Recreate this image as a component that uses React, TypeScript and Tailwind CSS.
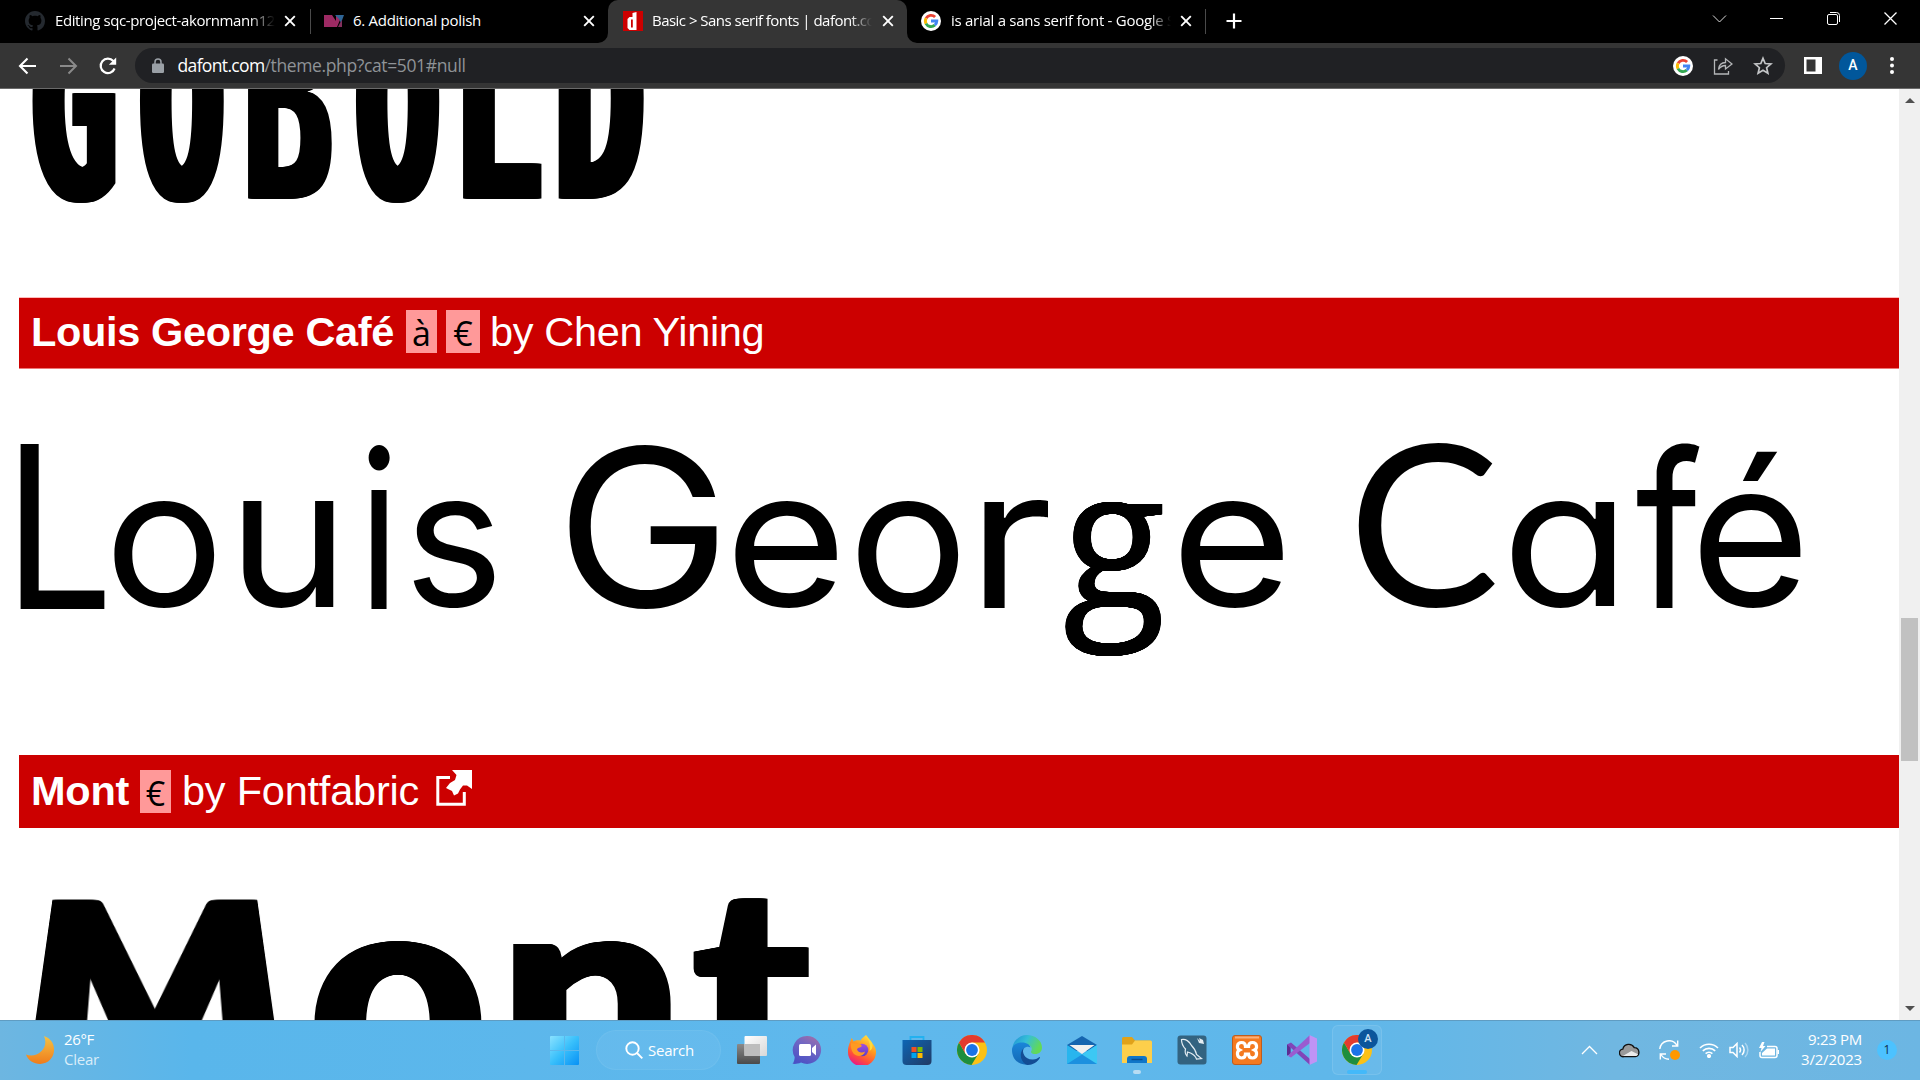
import React from "react";

const UI = '"Open Sans", "Noto Sans", sans-serif';
const ARIAL = '"Liberation Sans", Arial, sans-serif';

const canvas = document.createElement("canvas").getContext("2d")!;

/* A line of text whose tracking is adjusted to fill a known width. */
function Fit({ text, w, size, family = UI, weight = 400, className = "" }: {
  text: string; w: number; size: number; family?: string; weight?: number; className?: string;
}) {
  canvas.font = `${weight} ${size}px ${family}`;
  const spacing = (w - canvas.measureText(text).width) / text.length;
  return (
    <span
      className={`block shrink-0 whitespace-pre ${className}`}
      style={{ fontFamily: family, fontSize: size, fontWeight: weight, letterSpacing: spacing, width: w }}
    >
      {text}
    </span>
  );
}

type Glyph = {
  c: string; x0: number; x1: number; y0?: number; y1?: number;
  font?: string; weight?: number; grow?: number; taper?: number;
};

/* Display lettering: every character is stretched to its own ink box, in flow. */
function Specimen({ glyphs, family, weight, size, top, bottom, grow = 0, feature }: {
  glyphs: Glyph[]; family: string; weight: number; size: number; top: number; bottom: number; grow?: number; feature?: string;
}) {
  return (
    <div className="flex whitespace-pre text-black blur-[0.7px]" style={{ fontFeatureSettings: feature, height: bottom, paddingLeft: glyphs[0].x0 }}>
      {glyphs.map((g, i) => {
        const next = glyphs[i + 1];
        const width = next ? next.x0 - g.x0 : g.x1 - g.x0;
        if (g.c === " ") return <span key={i} className="shrink-0" style={{ width }}> </span>;
        const fam = g.font ?? family;
        const wt = g.weight ?? weight;
        canvas.font = `${wt} ${size}px ${fam}`;
        const m = canvas.measureText(g.c);
        const extra = g.grow ?? grow;
        const sx = (g.x1 - g.x0 - extra) / (m.actualBoundingBoxRight + m.actualBoundingBoxLeft);
        const y0 = g.y0 ?? top;
        const y1 = g.y1 ?? bottom;
        /* taper: width of the top edge relative to the baseline */
        const taper = g.taper ?? 1;
        const tall = (y1 - y0) / taper;
        const sy = tall / (m.actualBoundingBoxAscent + m.actualBoundingBoxDescent);
        const p = (1 / taper - 1) / tall;
        const mid = (g.x1 - g.x0) / 2;
        const keystone = p ? `translate(${mid}px,${y1}px) matrix3d(1,0,0,0,0,1,0,${-p},0,0,1,0,0,0,0,1) translate(${-mid}px,${-y1}px) ` : "";
        const baseline = (size - m.fontBoundingBoxAscent - m.fontBoundingBoxDescent) / 2 + m.fontBoundingBoxAscent;
        const tx = m.actualBoundingBoxLeft * sx;
        const ty = y1 - (baseline + m.actualBoundingBoxDescent) * sy;
        const shadow = extra
          ? Array.from({ length: 10 }, (_, k) => `${((k + 1) / 10) * (extra / sx)}px 0 #000`).join(",")
          : undefined;
        return (
          <span
            key={i}
            className="block shrink-0 origin-top-left"
            style={{
              width, height: size, lineHeight: `${size}px`, fontFamily: fam, fontWeight: wt, fontSize: size,
              transform: `${keystone}matrix(${sx},0,0,${sy},${tx},${ty})`, textShadow: shadow,
            }}
          >
            {g.c}
          </span>
        );
      })}
    </div>
  );
}

const gobold: Glyph[] = [
  { c: "G", x0: 31, x1: 117, y1: 114 },
  { c: "O", x0: 137.5, x1: 224, y1: 114 },
  { c: "B", x0: 246, x1: 333.5 },
  { c: "O", x0: 354, x1: 440, y1: 114 },
  { c: "L", x0: 463, x1: 541.5 },
  { c: "D", x0: 557.5, x1: 644 },
];

const LATO = "Lato, sans-serif";

const louis: Glyph[] = [
  { c: "L", x0: 19.5, x1: 104 },
  { c: "o", x0: 114, x1: 215, y0: 57 },
  { c: "u", x0: 243, x1: 334, y0: 57 },
  { c: "i", x0: 368, x1: 390 },
  { c: "s", x0: 413, x1: 495, y0: 57 },
  { c: " ", x0: 495, x1: 569 },
  { c: "G", x0: 569, x1: 717 },
  { c: "e", x0: 735, x1: 837, y0: 57 },
  { c: "o", x0: 858, x1: 959, y0: 57 },
  { c: "r", x0: 984, x1: 1048, y0: 57 },
  { c: "g", x0: 1065, x1: 1163, y0: 57, y1: 212, font: '"Open Sans", sans-serif', weight: 400, grow: 2 },
  { c: "e", x0: 1181, x1: 1283, y0: 57 },
  { c: " ", x0: 1283, x1: 1357 },
  { c: "C", x0: 1357.5, x1: 1495, font: LATO },
  { c: "a", x0: 1510, x1: 1604, y0: 57 },
  { c: "f", x0: 1637, x1: 1700 },
  { c: "é", x0: 1700, x1: 1800.5, y0: 7 },
];

const mont: Glyph[] = [
  { c: "M", x0: 19, x1: 291, taper: 0.776, grow: 16 },
  { c: "o", x0: 310, x1: 486, y0: 41, y1: 214, grow: 8 },
  { c: "n", x0: 510, x1: 671, y0: 41, grow: 8 },
  { c: "t", x0: 689, x1: 813, y1: 213, grow: 8 },
];

function Cross() {
  return (
    <svg viewBox="0 0 12 12" className="size-3 shrink-0" fill="none" stroke="#fff" strokeWidth="1.9">
      <path d="M1.2 1.2 10.8 10.8M10.8 1.2 1.2 10.8" />
    </svg>
  );
}

function GoogleG({ className }: { className: string }) {
  return (
    <svg viewBox="0 0 20 20" className={className}>
      <circle cx="10" cy="10" r="10" fill="#fff" />
      <g fill="none" strokeWidth="2.9">
        <path d="M5.1 7.3A5.7 5.7 0 0 1 14.1 6" stroke="#ea4335" />
        <path d="M5.1 12.8a5.9 5.9 0 0 1 0-5.6" stroke="#fbbc05" />
        <path d="M13.8 14.2A5.7 5.7 0 0 1 5 12.6" stroke="#34a853" />
        <path d="M10 10h5.8a5.6 5.6 0 0 1-2 4.2" stroke="#4285f4" />
      </g>
    </svg>
  );
}

function Github() {
  return (
    <svg viewBox="0 0 16 16" className="size-5 shrink-0" fill="#24292f">
      <path d="M8 0C3.58 0 0 3.58 0 8c0 3.54 2.29 6.53 5.47 7.59.4.07.55-.17.55-.38 0-.19-.01-.82-.01-1.49-2.01.37-2.53-.49-2.69-.94-.09-.23-.48-.94-.82-1.13-.28-.15-.68-.52-.01-.53.63-.01 1.08.58 1.23.82.72 1.21 1.87.87 2.33.66.07-.52.28-.87.51-1.07-1.78-.2-3.64-.89-3.64-3.95 0-.87.31-1.59.82-2.15-.08-.2-.36-1.02.08-2.12 0 0 .67-.21 2.2.82.64-.18 1.32-.27 2-.27s1.36.09 2 .27c1.53-1.04 2.2-.82 2.2-.82.44 1.1.16 1.92.08 2.12.51.56.82 1.27.82 2.15 0 3.07-1.87 3.75-3.65 3.95.29.25.54.73.54 1.48 0 1.07-.01 1.93-.01 2.2 0 .21.15.46.55.38A8.01 8.01 0 0 0 16 8c0-4.42-3.58-8-8-8z" />
    </svg>
  );
}

function TabStrip() {
  return (
    <div className="flex h-[43px] shrink-0 bg-black text-white">
      <div className="flex h-[42px] w-[310px] items-center pl-[25px]">
        <Github />
        <div className="ml-[10px] w-[220px] overflow-hidden [mask-image:linear-gradient(90deg,#000_88%,transparent)]">
          <Fit text="Editing sqc-project-akornmann12" w={220} size={15} className="-mt-px" />
        </div>
        <div className="ml-[9px]"><Cross /></div>
      </div>
      <div className="mt-[9px] h-[25px] w-px bg-[#4a4a4a]" />
      <div className="flex h-[42px] w-[297px] items-center pl-[13px]">
        <svg viewBox="0 0 20 12" className="h-3 w-5 shrink-0">
          <path d="M0 0h8l4 6V0h2l2 5-3 7H0z" fill="#9d2a63" />
          <path d="M11 0h9l-3 8-2-4z" fill="#2f6596" />
          <path d="M16 8l2-3v7h-4z" fill="#84305e" />
        </svg>
        <Fit text="6. Additional polish" w={128} size={15} className="ml-[9px] -mt-px" />
        <div className="ml-[102px]"><Cross /></div>
      </div>
      <div className="relative flex h-[43px] w-[299px] items-center rounded-t-[10px] bg-[#353535] pb-px pl-[15px]">
        <svg viewBox="0 0 10 10" className="absolute bottom-0 -left-[10px] size-[10px]"><path d="M10 0v10H0A10 10 0 0 0 10 0z" fill="#353535" /></svg>
        <svg viewBox="0 0 10 10" className="absolute -right-[10px] bottom-0 size-[10px]"><path d="M0 0v10h10A10 10 0 0 1 0 0z" fill="#353535" /></svg>
        <svg viewBox="0 0 20 20" className="size-5 shrink-0">
          <path d="M0 0h20v20H0z" fill="#c00" />
          <path d="M9.500 2l4-1v18H6.500l-2-2V8l2-2h3z" fill="#fff" />
          <path d="M8 8.500h1.800v8H8z" fill="#c00" />
        </svg>
        <div className="ml-[9px] w-[220px] overflow-hidden [mask-image:linear-gradient(90deg,#000_90%,transparent)]">
          <Fit text="Basic > Sans serif fonts | dafont.co" w={223} size={15} className="-mt-px" />
        </div>
        <div className="ml-[10px]"><Cross /></div>
      </div>
      <div className="flex h-[42px] w-[298px] items-center pl-[14px]">
        <GoogleG className="size-5 shrink-0" />
        <div className="ml-[10px] w-[220px] overflow-hidden [mask-image:linear-gradient(90deg,#000_90%,transparent)]">
          <Fit text="is arial a sans serif font - Google S" w={224} size={15} className="-mt-px" />
        </div>
        <div className="ml-[9px]"><Cross /></div>
      </div>
      <div className="mt-[9px] h-[25px] w-px bg-[#4a4a4a]" />
      <svg viewBox="0 0 16 16" className="mt-[13px] ml-[20px] size-4" stroke="#fff" strokeWidth="2.2"><path d="M8 .5v15M.5 8h15" /></svg>
      <div className="ml-auto flex h-[37px] w-[208px] items-center gap-[42px] text-white">
        <svg viewBox="0 0 15 15" className="size-[15px]" fill="none" stroke="#ddd" strokeWidth="1"><path d="M1 4.500l6.500 6.500L14 4.500" /></svg>
        <svg viewBox="0 0 15 15" className="size-[15px]" stroke="#fff"><path d="M1 7.500h13" /></svg>
        <svg viewBox="0 0 15 15" className="size-[15px]" fill="none" stroke="#fff"><rect x="1.500" y="3.500" width="10" height="10" rx="1.500" /><path d="M4 1.500h6.500a3 3 0 0 1 3 3V11" /></svg>
        <svg viewBox="0 0 15 15" className="size-[15px]" stroke="#fff" strokeWidth="1.300"><path d="M1.500 1.500l12 12M13.500 1.500l-12 12" /></svg>
      </div>
    </div>
  );
}

function Toolbar() {
  return (
    <div className="flex h-[46px] shrink-0 items-start border-b border-[#6a6a6a] bg-[#353535] pt-[5px]">
      <div className="flex h-[35px] w-[135px] items-center pl-[18px]">
        <svg viewBox="0 0 20 20" className="size-5" fill="none" stroke="#fff" strokeWidth="2.100"><path d="M18 10H2.500M9.500 2.500 2 10l7.500 7.500" /></svg>
        <svg viewBox="0 0 20 20" className="ml-5 size-5" fill="none" stroke="#8a8a8a" strokeWidth="2"><path d="M2 10h15.500M10.500 2.500 18 10l-7.500 7.500" /></svg>
        <svg viewBox="0 0 20 20" className="ml-5 size-5" fill="none" stroke="#fff" strokeWidth="2.200"><path d="M16.600 12.500A7.200 7.200 0 1 1 15.300 5.100L17 7" /><path d="M18.200 1.500v7.300h-7.300z" fill="#fff" stroke="none" /></svg>
      </div>
      <div className="flex h-[35px] w-[1650px] items-center rounded-full bg-[#202124]">
        <svg viewBox="0 0 12 15" className="ml-[17px] h-[15px] w-3" fill="#9aa0a6"><rect y="5.500" width="12" height="9.500" rx="1.200" /><path d="M3 6V4a3 3 0 0 1 6 0v2" fill="none" stroke="#9aa0a6" strokeWidth="1.500" /></svg>
        <Fit text="dafont.com" w={87} size={17.5} className="ml-[13.500px] leading-[35px] text-white" />
        <Fit text="/theme.php?cat=501#null" w={201} size={17.5} className="leading-[35px] text-[#8f9397]" />
        <GoogleG className="ml-auto size-5" />
        <svg viewBox="0 0 20 20" className="ml-[20px] size-5" fill="none" stroke="#b4b6b8" strokeWidth="1.300"><path d="M4.500 4H1.500v14h14v-3M5.500 13.500c.5-4.500 3-7 7-7V2.800L19 8l-6.500 5v-3.500c-3 0-5.200 1.300-7 4z" /></svg>
        <svg viewBox="0 0 20 20" className="mr-[12px] ml-5 size-5" fill="none" stroke="#c3c5c7" strokeWidth="1.700"><path d="M10 2.300l2.200 5.200 5.700.5-4.300 3.700 1.300 5.500L10 14.300l-4.900 2.900 1.300-5.500L2.100 8l5.700-.5z" /></svg>
      </div>
      <div className="flex h-[35px] items-center pl-[19px]">
        <svg viewBox="0 0 18 17" className="h-[17px] w-[18px]"><path d="M0 0h18v17H0z" fill="#fff" /><path d="M2.500 2.500h9v12h-9z" fill="#353535" /></svg>
        <div className="ml-[17px] flex size-7 items-center justify-center rounded-full bg-[#01579b] text-[14px] font-medium text-white [font-family:Roboto,sans-serif]">A</div>
        <svg viewBox="0 0 4 17" className="ml-[23px] h-[17px] w-1" fill="#fff"><circle cx="2" cy="2" r="2" /><circle cx="2" cy="8.500" r="2" /><circle cx="2" cy="15" r="2" /></svg>
      </div>
    </div>
  );
}

function Badge({ c, className }: { c: string; className: string }) {
  return (
    <div className={`flex h-[43px] shrink-0 items-center justify-center bg-[#ff9999] pt-[3px] text-[34px] leading-[40px] text-black [font-family:'Open_Sans',sans-serif] ${className}`}>{c}</div>
  );
}

function Page() {
  return (
    <div className="h-[931px] w-[1899px] overflow-hidden bg-white">
      <div className="h-[208px]">
        <Specimen glyphs={gobold} family={'"DejaVu Sans Mono", monospace'} weight={700} size={280} top={-92} bottom={109.500} grow={10} />
      </div>
      <div className="ml-[19px] flex h-[72px] items-start border-y border-b-[#e77] border-t-[#fbb] bg-[#c00] pt-[11px] text-white">
        <Fit text="Louis George Café" w={363} size={41.5} family={ARIAL} weight={700} className="ml-[12px] leading-[46px]" />
        <Badge c="à" className="ml-[12px] mt-px w-[31px]" />
        <Badge c="€" className="ml-[9px] mt-px w-[34px]" />
        <Fit text="by Chen Yining" w={275} size={41.5} family={ARIAL} className="ml-[10px] leading-[46px]" />
      </div>
      <div className="h-[386px] pt-[75px]">
        <Specimen glyphs={louis} family="Inter, sans-serif" weight={400} size={226} top={0} bottom={164.500} feature='"cv11"' />
      </div>
      <div className="ml-[19px] flex h-[73px] items-start bg-[#c00] pt-[15px] text-white">
        <Fit text="Mont" w={98} size={41.5} family={ARIAL} weight={700} className="ml-[12px] leading-[42px]" />
        <Badge c="€" className="ml-[11px] w-[31px]" />
        <Fit text="by Fontfabric" w={237} size={41.5} family={ARIAL} className="ml-[11px] leading-[42px]" />
        <svg viewBox="0 0 36 36" className="ml-[17px] size-9">
          <path d="M14 7.500H1.800V34.200H28.300V22" fill="none" stroke="#fff" strokeWidth="3" />
          <path d="M16 0h20v19l-5-3.500h-4l-3 4-2 4-4 2-2-4.500-6-3 4-5 5-3 1.500-5z" fill="#fff" />
        </svg>
      </div>
      <div className="pt-[70px]">
        <Specimen glyphs={mont} family={LATO} weight={900} size={290} top={0} bottom={210} grow={4} />
      </div>
    </div>
  );
}

function Scrollbar() {
  return (
    <div className="flex h-[931px] w-[21px] flex-col items-center bg-[#f0f0f0]">
      <svg viewBox="0 0 10 5" className="mt-[9px] h-[5px] w-[10px]" fill="#505050"><path d="M5 0l5 5H0z" /></svg>
      <div className="mt-[515px] h-[143px] w-[17px] bg-[#c1c1c1]" />
      <svg viewBox="0 0 10 5" className="mt-auto mb-[9px] h-[5px] w-[10px]" fill="#505050"><path d="M0 0h10L5 5z" /></svg>
    </div>
  );
}

function Chrome() {
  return (
    <svg viewBox="0 0 30 30" className="size-[30px]">
      <circle cx="15" cy="15" r="15" fill="#fbc116" />
      <path d="M2 7.500A15 15 0 0 0 14.500 30L21.500 18.500 15 22 8.500 18.700z" fill="#1e8e3e" />
      <path d="M2 7.500A15 15 0 0 1 28 7.500H15L8.500 11.500 8.500 18.700z" fill="#e33b2e" />
      <circle cx="15" cy="15" r="7.500" fill="#fff" />
      <circle cx="15" cy="15" r="5.900" fill="#1a73e8" />
    </svg>
  );
}

function AppCell({ children }: { children: React.ReactNode }) {
  return <div className="flex h-full w-[55px] shrink-0 items-center justify-center">{children}</div>;
}

const ico = "size-[30px]";

function Apps() {
  return (
    <>
      <AppCell>
        <svg viewBox="0 0 30 30" className={ico}>
          <defs>
            <linearGradient id="tv1" x2="0" y2="1"><stop stopColor="#8a8a8a" /><stop offset="1" stopColor="#4a4a4a" /></linearGradient>
            <linearGradient id="tv2" x2="1" y2="1"><stop stopColor="#fff" /><stop offset="1" stopColor="#d8d8d8" /></linearGradient>
          </defs>
          <rect y="9" width="23" height="20" rx="1" fill="url(#tv1)" />
          <rect x="7.500" y="1" width="22.500" height="20" rx="1" fill="url(#tv2)" />
          <path d="M7.500 9H23v12H7.500z" fill="#bdbdbd" />
        </svg>
      </AppCell>
      <AppCell>
        <svg viewBox="0 0 30 30" className={ico}>
          <defs><linearGradient id="chat" x1=".8" y1="0" x2=".3" y2="1"><stop stopColor="#a06fa8" /><stop offset=".4" stopColor="#6f66c4" /><stop offset="1" stopColor="#4b51c5" /></linearGradient></defs>
          <path d="M15 1a14 14 0 1 1-6 26.600C6 29 3 29 .5 28.800 2 27 2.500 25 2.700 22A14 14 0 0 1 15 1z" fill="url(#chat)" />
          <rect x="7" y="9" width="12" height="12" rx="1.500" fill="#fff" /><path d="M20 13l4-3.500v11L20 17z" fill="#fff" />
        </svg>
      </AppCell>
      <AppCell>
        <svg viewBox="0 0 30 30" className={ico}>
          <defs>
            <linearGradient id="ff" x1=".8" x2=".3" y2="1"><stop stopColor="#ffe847" /><stop offset=".4" stopColor="#ff9a1f" /><stop offset=".75" stopColor="#ff4a3d" /><stop offset="1" stopColor="#e5178e" /></linearGradient>
            <linearGradient id="ff2" x2="0" y2="1"><stop stopColor="#a34fe0" /><stop offset="1" stopColor="#5b3fc4" /></linearGradient>
          </defs>
          <path d="M19 0c2 2 3 4 3.500 6 3 2 7 6.500 6.500 11.500A14 14 0 0 1 1 17C.8 11 3 8 4.500 3c1 1 1.500 2 2 3.500 2-1.500 5-1.500 7-1C15 3 17 1.500 19 0z" fill="url(#ff)" />
          <circle cx="15" cy="15" r="6.300" fill="url(#ff2)" />
          <path d="M4 8c3 0 5 1 7 1 3-.5 4 1 3.500 2.500-1.500 1.500-4 1-4.500 3 1 3 5 4 8 2-1 5-8 6-11.500 2C4 15.500 3.500 11 4 8z" fill="#ff9a22" />
          <path d="M19 1c3 5 5 9 3.500 15 2-1 3-3 3-5 1-3-3-7-6.500-10z" fill="#ffd93b" />
        </svg>
      </AppCell>
      <AppCell>
        <svg viewBox="0 0 30 30" className={ico}>
          <defs><linearGradient id="st" x2="1" y2="1"><stop stopColor="#0d66b5" /><stop offset="1" stopColor="#223a63" /></linearGradient></defs>
          <path d="M8.500 6V2h13v4" fill="none" stroke="#22b1f0" strokeWidth="1.800" />
          <path d="M.5 5h29v21a4 4 0 0 1-4 4h-21a4 4 0 0 1-4-4z" fill="url(#st)" />
          <path d="M9.500 12h5v5h-5z" fill="#f25022" /><path d="M15.500 12h5v5h-5z" fill="#7fba00" /><path d="M9.500 18h5v5h-5z" fill="#00a4ef" /><path d="M15.500 18h5v5h-5z" fill="#ffb900" />
        </svg>
      </AppCell>
      <AppCell><Chrome /></AppCell>
      <AppCell>
        <svg viewBox="0 0 30 30" className={ico}>
          <defs>
            <linearGradient id="ed1" x2="1" y2=".4"><stop stopColor="#1c8ed8" /><stop offset=".5" stopColor="#35bfd6" /><stop offset="1" stopColor="#62d957" /></linearGradient>
            <linearGradient id="ed2" x2="0" y2="1"><stop stopColor="#1a86d9" /><stop offset="1" stopColor="#1368b5" /></linearGradient>
          </defs>
          <path d="M.5 12C2 5 8 0 15 0c8 0 15 5.500 15 12.500 0 4.500-3.500 6.500-6.500 6.500-3 0-5-1-4.500-2.500 2-3 0-7-5-7C8 9.500 2 10 .5 12z" fill="url(#ed1)" />
          <path d="M0 15c0-5 5-7.500 10-7.500 5 0 8 2.500 8.500 5-3-2-8 0-8 5 0 6 4 10.500 9 11.500C8 32 0 25 0 15z" fill="url(#ed2)" />
          <path d="M12 13c-3 4 1 12 9 11.500 3 0 5-1.500 6.500-2.500.5 0 .7.300.3 1C25.500 27 21 30 15.500 30 9 28 6 18 12 13z" fill="#134d94" />
        </svg>
      </AppCell>
      <AppCell>
        <svg viewBox="0 0 30 30" className={ico}>
          <path d="M0 10L15 1l15 9v6H0z" fill="#1565b0" />
          <path d="M0 10l15 9.500L30 10v19H0z" fill="#28b5ee" />
          <path d="M0 29L30 10v19z" fill="#1c90df" />
          <path d="M15 19.500L30 29V10z" fill="#3cc8f4" />
          <path d="M2.500 10h25L15 19z" fill="#f0f0f0" />
        </svg>
      </AppCell>
      <div className="relative flex h-full w-[55px] shrink-0 items-center justify-center">
        <svg viewBox="0 0 30 30" className={ico}>
          <path d="M0 3.500A1.500 1.500 0 0 1 1.500 2H10l3 3.500h15.500v6H0z" fill="#e0a21a" />
          <path d="M0 9.500h10l3-4h15.500A1.500 1.500 0 0 1 30 7v21H0z" fill="#fdcf4b" />
          <path d="M5 28v-4a3 3 0 0 1 3-3h14a3 3 0 0 1 3 3v4z" fill="#1076c8" /><path d="M9.500 24.500h11" stroke="#0b4d8c" strokeWidth="1.400" />
        </svg>
        <div className="absolute bottom-[5px] h-1 w-2 rounded-full bg-[#b7dcf3]" />
      </div>
      <AppCell>
        <svg viewBox="0 0 30 30" className={ico}>
          <rect x=".5" y=".5" width="29" height="29" rx="3" fill="#336380" />
          <g fill="none" stroke="#e4edf2" strokeWidth="1.200"><path d="M4.500 4.500c4-1 8 2 10 6 3 3 4.500 6 5 9l5 4-5 .5c-1-3-4-5-6-6l-3-1-.5 4c-2-2-2-5-1.500-7-3-3-4-6-4-9.500z" /></g>
          <path d="M20 3l3 3-1-3 4 2 1 4-5-1z" fill="#e4edf2" />
        </svg>
      </AppCell>
      <AppCell>
        <svg viewBox="0 0 30 30" className={ico}>
          <rect x=".5" y=".5" width="29" height="29" rx="2.500" fill="#f47a20" stroke="#bd5d20" />
          <path d="M3 2.500h24" stroke="#f9b07a" strokeWidth="2" />
          <path d="M9.500 7.500c3 0 4 1.500 4 4h3c0-2.500 1-4 4-4 5 0 5 6 2 7.500 3 1.500 3 8-2 8-3 0-4-1.500-4-4h-3c0 2.500-1 4-4 4-5 0-5-6.500-2-8-3-1.500-3-7.500 2-7.500z" fill="none" stroke="#fff" strokeWidth="3.200" />
        </svg>
      </AppCell>
      <AppCell>
        <svg viewBox="0 0 30 30" className={ico}>
          <path d="M0 9.500L4 7.500 23 24v6L3.500 12.500 3.500 19 0 20.500z" fill="#8145b8" />
          <path d="M0 9.500l3.500 3.500v6L0 20.500z" fill="#5c2d91" />
          <path d="M1 21l3 1.500L23 8V0L3 18.500z" fill="#9a5bd0" />
          <path d="M22.500 0L30 3.500v23L22.500 30z" fill="#c193f5" />
        </svg>
      </AppCell>
      <div className="relative ml-[2.500px] flex h-[50px] w-[50px] shrink-0 items-center justify-center self-center rounded-md border border-white/10 bg-white/5">
        <Chrome />
        <div className="absolute top-[3px] right-[3px] flex size-5 items-center justify-center rounded-full bg-[#0b559b] text-[11px] font-medium text-[#cfe3f4] [font-family:Roboto,sans-serif]">A</div>
        <div className="absolute bottom-0 h-1 w-5 rounded-full bg-[#43b9fa]" />
      </div>
    </>
  );
}

function Taskbar() {
  return (
    <div className="flex h-[60px] shrink-0 items-center border-t border-[#5f9cc2] bg-[linear-gradient(90deg,#6db6e1_0%,#59b6eb_10%,#5fb8ec_45%,#5fb7ea_70%,#70b7e1_84%,#6cb6e3_100%)] pb-px text-white">
      <div className="flex w-[550px] items-center pl-[25px]">
        <svg viewBox="0 0 30 30" className="size-[30px]">
          <defs><linearGradient id="mn" x2="0" y2="1"><stop stopColor="#f5c344" /><stop offset="1" stopColor="#ef7c1c" /></linearGradient></defs>
          <path d="M19 1c6 2 10 7 10 13a14 14 0 0 1-14 15C9 29 3 25.500 1 19.500c5 2 11 1 15-3 4.500-4 5.500-10 3-15.500z" fill="url(#mn)" />
        </svg>
        <div className="mb-[3px] ml-[9px] flex flex-col leading-[20px]">
          <Fit text="26°F" w={30} size={15} />
          <Fit text="Clear" w={35} size={15} className="text-[#d9edf9]" />
        </div>
      </div>
      <svg viewBox="0 0 29 29" className="size-[29px] shrink-0">
        <defs><linearGradient id="wn" x2="1" y2="1"><stop stopColor="#8ae2ff" /><stop offset=".5" stopColor="#38bffb" /><stop offset="1" stopColor="#0891f5" /></linearGradient></defs>
        <path d="M0 1a1 1 0 0 1 1-1h13v14H0zM15 0h13a1 1 0 0 1 1 1v13H15zM0 15h14v14H1a1 1 0 0 1-1-1zM15 15h14v13a1 1 0 0 1-1 1H15z" fill="url(#wn)" />
      </svg>
      <div className="ml-[17px] flex h-10 w-[125px] shrink-0 items-center rounded-full border border-white/5 bg-white/5 pl-[28px]">
        <svg viewBox="0 0 18 18" className="size-[18px]" fill="none" stroke="#fff" strokeWidth="1.900"><circle cx="7.500" cy="7.500" r="6.200" /><path d="M12 12l5.300 5.300" /></svg>
        <Fit text="Search" w={46} size={15} className="ml-[5px]" />
      </div>
      <div className="ml-[3.500px] flex h-full"><Apps /></div>
      <div className="ml-auto flex items-center">
        <svg viewBox="0 0 17 10" className="h-[10px] w-[17px]" fill="none" stroke="#fff" strokeWidth="1.300"><path d="M1 9l7.500-7.500L16 9" /></svg>
        <svg viewBox="0 0 22 15" className="ml-[21px] h-[15px] w-[21px]">
          <path d="M5 14a4 4 0 0 1-1-8 6.500 6.500 0 0 1 12-1.500 4.800 4.800 0 0 1 1 9.500z" fill="#9a9a9a" stroke="#111" strokeWidth="1.400" />
          <path d="M4 13.300l9-5.300 7 3.500c-.5 1.500-2 1.800-3 1.800z" fill="#ececec" />
        </svg>
        <div className="relative ml-[19px] size-5">
          <svg viewBox="0 0 20 20" className="size-5" fill="none" stroke="#fff" strokeWidth="1.400"><path d="M.8 9A9.200 9.200 0 0 1 18 5.500M18.700.5V6H13M10 19.200A9.200 9.200 0 0 1 2 14.500M1.300 19.500V14H7" /></svg>
          <div className="absolute right-[-1px] bottom-0 size-[10px] rounded-full bg-[#ff9800]" />
        </div>
        <svg viewBox="0 0 20 16" className="ml-[20px] h-4 w-5" fill="none" stroke="#fff" strokeWidth="1.600"><path d="M1 6a12.800 12.800 0 0 1 18 0M3.800 8.900a8.800 8.800 0 0 1 12.400 0M6.600 11.700a4.900 4.900 0 0 1 6.800 0" /><circle cx="10" cy="14" r="1.300" fill="#fff" /></svg>
        <svg viewBox="0 0 20 16" className="ml-[10px] h-4 w-5" fill="none" stroke="#fff" strokeWidth="1.500"><path d="M1 5.500h3l4-4v13l-4-4H1zM10.500 5.500a4 4 0 0 1 0 5M13 3a7 7 0 0 1 0 10" /><path d="M16 1a10 10 0 0 1 0 14" stroke="#a9d4ef" /></svg>
        <svg viewBox="0 0 20 17" className="ml-[10px] h-[17px] w-5"><path d="M8 4.500h8a2 2 0 0 1 2 2v7a2 2 0 0 1-2 2H3a2 2 0 0 1-2-2V10" fill="none" stroke="#fff" strokeWidth="1.500" /><path d="M8 6.500h8v7H3V11z" fill="#fff" /><path d="M18.500 8H20v4h-1.500zM3 0L0 6h2.500L1.500 10 6.500 4H4L5.500 0z" fill="#fff" /></svg>
        <div className="mb-[3px] ml-[20px] flex w-[63px] flex-col items-end leading-[20px]">
          <Fit text="9:23 PM" w={54} size={15} />
          <Fit text="3/2/2023" w={61} size={15} />
        </div>
        <div className="mr-[23px] ml-[15px] flex size-5 items-center justify-center rounded-full bg-[#4cc2ff] text-[12px] text-[#10314a] [font-family:'Open_Sans',sans-serif]">1</div>
      </div>
    </div>
  );
}

export default function App() {
  return (
    <div className="flex h-[1080px] w-[1920px] flex-col overflow-hidden bg-white">
      <TabStrip />
      <Toolbar />
      <div className="flex h-[931px] shrink-0">
        <Page />
        <Scrollbar />
      </div>
      <Taskbar />
    </div>
  );
}
